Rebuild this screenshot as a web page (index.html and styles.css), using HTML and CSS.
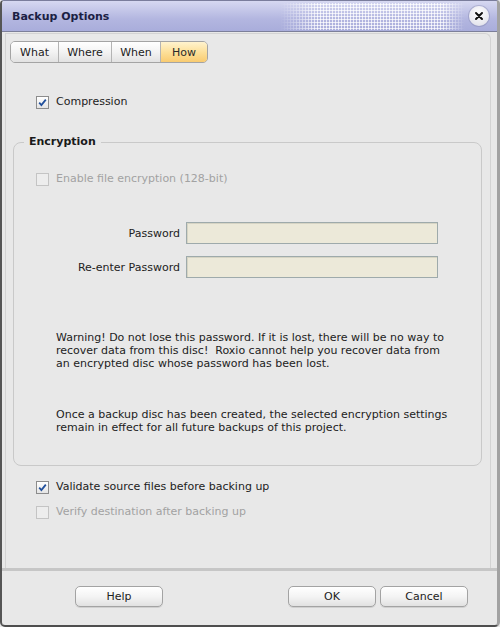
FILE: index.html
```html
<!DOCTYPE html>
<html>
<head>
<meta charset="utf-8">
<link rel="stylesheet" href="styles.css">
</head>
<body>
<div class="window">
  <div class="titlebar">
    <span class="title">Backup Options</span>
    <div class="dots"></div>
    <div class="close">
      <svg width="10" height="10" viewBox="0 0 10 10"><path d="M2 2 L8 8 M8 2 L2 8" stroke="#111" stroke-width="2" stroke-linecap="round"/></svg>
    </div>
  </div>
  <div class="panel">
    <div class="tabs">
      <div class="tab t-what">What</div>
      <div class="tab t-where">Where</div>
      <div class="tab t-when">When</div>
      <div class="tab t-how active">How</div>
    </div>

    <div class="row compression">
      <span class="box checked"><svg width="11" height="11" viewBox="0 0 11 11"><path d="M2.2 5.6 L4.4 8 L8.8 2.6" fill="none" stroke="#22509c" stroke-width="1.8"/></svg></span>
      <span>Compression</span>
    </div>

    <fieldset class="group">
      <legend>Encryption</legend>
      <div class="row disabled enable">
        <span class="box"></span>
        <span>Enable file encryption (128-bit)</span>
      </div>
      <div class="field first">
        <label class="lbl">Password</label>
        <div class="input"></div>
      </div>
      <div class="field second">
        <label class="lbl">Re-enter Password</label>
        <div class="input"></div>
      </div>
      <p class="note warn">Warning! Do not lose this password. If it is lost, there will be no way to<br>recover data from this disc!&nbsp; Roxio cannot help you recover data from<br>an encrypted disc whose password has been lost.</p>
      <p class="note once">Once a backup disc has been created, the selected encryption settings<br>remain in effect for all future backups of this project.</p>
    </fieldset>

    <div class="row validate">
      <span class="box checked"><svg width="11" height="11" viewBox="0 0 11 11"><path d="M2.2 5.6 L4.4 8 L8.8 2.6" fill="none" stroke="#22509c" stroke-width="1.8"/></svg></span>
      <span>Validate source files before backing up</span>
    </div>
    <div class="row disabled verify">
      <span class="box"></span>
      <span>Verify destination after backing up</span>
    </div>
  </div>
  <div class="footer">
    <div class="btn help">Help</div>
    <div class="spacer"></div>
    <div class="btn">OK</div>
    <div class="btn">Cancel</div>
  </div>
</div>
</body>
</html>
```

FILE: styles.css
```css
html, body {
  margin: 0;
  padding: 0;
  background: #e8e8e8;
}
body {
  font-family: "DejaVu Sans", Verdana, sans-serif;
  font-size: 11px;
  color: #222;
}
.window {
  width: 500px;
  height: 627px;
  box-sizing: border-box;
  border-left: 2px solid #555;
  border-right: 3px solid #a2a2a2;
  border-bottom: 2px solid #4e4e4e;
  border-top: 1px solid #7a7d9c;
  border-radius: 4px 4px 5px 5px;
  background: #e8e8e8;
  display: flex;
  flex-direction: column;
  overflow: hidden;
}
.titlebar {
  height: 30px;
  flex: none;
  border-bottom: 1px solid #7c7f99;
  background: linear-gradient(#d6d8f1, #b3b6e0 60%, #a9addb);
  display: flex;
  align-items: center;
  padding-left: 10px;
}
.title {
  font-weight: bold;
  font-size: 11px;
  color: #1c1f44;
}
.dots {
  margin-left: auto;
  width: 185px;
  height: 27px;
  background-image: radial-gradient(circle, rgba(255,255,255,0.95) 0.9px, transparent 1.3px);
  background-size: 3px 3px;
  -webkit-mask-image: linear-gradient(to right, transparent, #000 20%, #000 88%, transparent);
  mask-image: linear-gradient(to right, transparent, #000 20%, #000 88%, transparent);
}
.close {
  width: 20px;
  height: 20px;
  border-radius: 50%;
  background: radial-gradient(circle at 50% 35%, #ffffff, #e6e6ee 70%, #c8c9d8);
  box-shadow: 0 0 0 1px rgba(120,122,160,0.35);
  display: flex;
  align-items: center;
  justify-content: center;
  margin: 0 8px 0 4px;
}
.panel {
  flex: 1;
  margin: 1px 6px 0 3px;
  border: 1px solid #d3d3d3;
  border-bottom: none;
  border-top-right-radius: 6px;
  padding: 7px 0 0 4px;
}
.tabs {
  display: inline-flex;
  border: 1px solid #a4a4a4;
  border-radius: 5px;
  overflow: hidden;
  height: 20px;
}
.tab {
  display: flex;
  align-items: center;
  justify-content: center;
  background: linear-gradient(#ffffff, #f3f3f3 50%, #e2e2e2);
  color: #222;
  border-left: 1px solid #b4b4b4;
}
.t-what { width: 47px; border-left: none; }
.t-where { width: 52px; }
.t-when { width: 48px; }
.t-how { width: 46px; }
.tab.active {
  background: linear-gradient(#fff3cf, #fde09a 50%, #f9cb70);
  color: #2a2a2a;
}
.row {
  display: flex;
  align-items: center;
  height: 14px;
  line-height: 14px;
  padding-left: 26px;
  gap: 7px;
}
.box {
  width: 11px;
  height: 11px;
  border: 1px solid #8c8c8c;
  background: linear-gradient(#ffffff, #e4e4e4);
  display: flex;
  align-items: center;
  justify-content: center;
  flex: none;
}
.disabled { color: #a2a2a2; }
.disabled .box {
  border-color: #c4c4c4;
  background: #ededed;
}
.compression { margin-top: 32px; }
.group {
  margin: 26px 0 0 3px;
  width: 469px;
  box-sizing: border-box;
  border: 1px solid #c9c9c9;
  border-radius: 8px;
  padding: 0 0 31px 0;
}
.group legend {
  font-weight: bold;
  color: #1a1a1a;
  padding: 0 5px;
  margin-left: 10px;
  line-height: 14px;
}
.group .row { padding-left: 22px; }
.enable { margin-top: 23px; }
.field {
  display: flex;
  align-items: center;
  gap: 6px;
}
.field.first { margin-top: 36px; }
.field.second { margin-top: 12px; }
.lbl {
  width: 166px;
  text-align: right;
}
.input {
  width: 250px;
  height: 20px;
  border: 1px solid #9eaaab;
  background: #ece9d9;
  box-shadow: inset 1px 1px 0 #d6d4c4;
}
.note {
  margin: 0;
  padding-left: 42px;
  line-height: 13px;
  color: #222;
}
.warn { margin-top: 53px; }
.once { margin-top: 38px; }
.validate { margin-top: 14px; }
.verify { margin-top: 11px; }
.footer {
  flex: none;
  border-top: 3px solid #c6c6c6;
  display: flex;
  align-items: flex-start;
  padding: 15px 29px 0 73px;
  box-sizing: border-box;
  height: 57px;
  gap: 4px;
}
.spacer { flex: 1; }
.btn {
  width: 86px;
  height: 19px;
  border: 1px solid #a3a3a3;
  border-radius: 5px;
  background: linear-gradient(#ffffff, #f4f4f4 50%, #e1e1e1);
  display: flex;
  align-items: center;
  justify-content: center;
  color: #222;
  box-shadow: 0 1px 0 #d0d0d0;
}
```
